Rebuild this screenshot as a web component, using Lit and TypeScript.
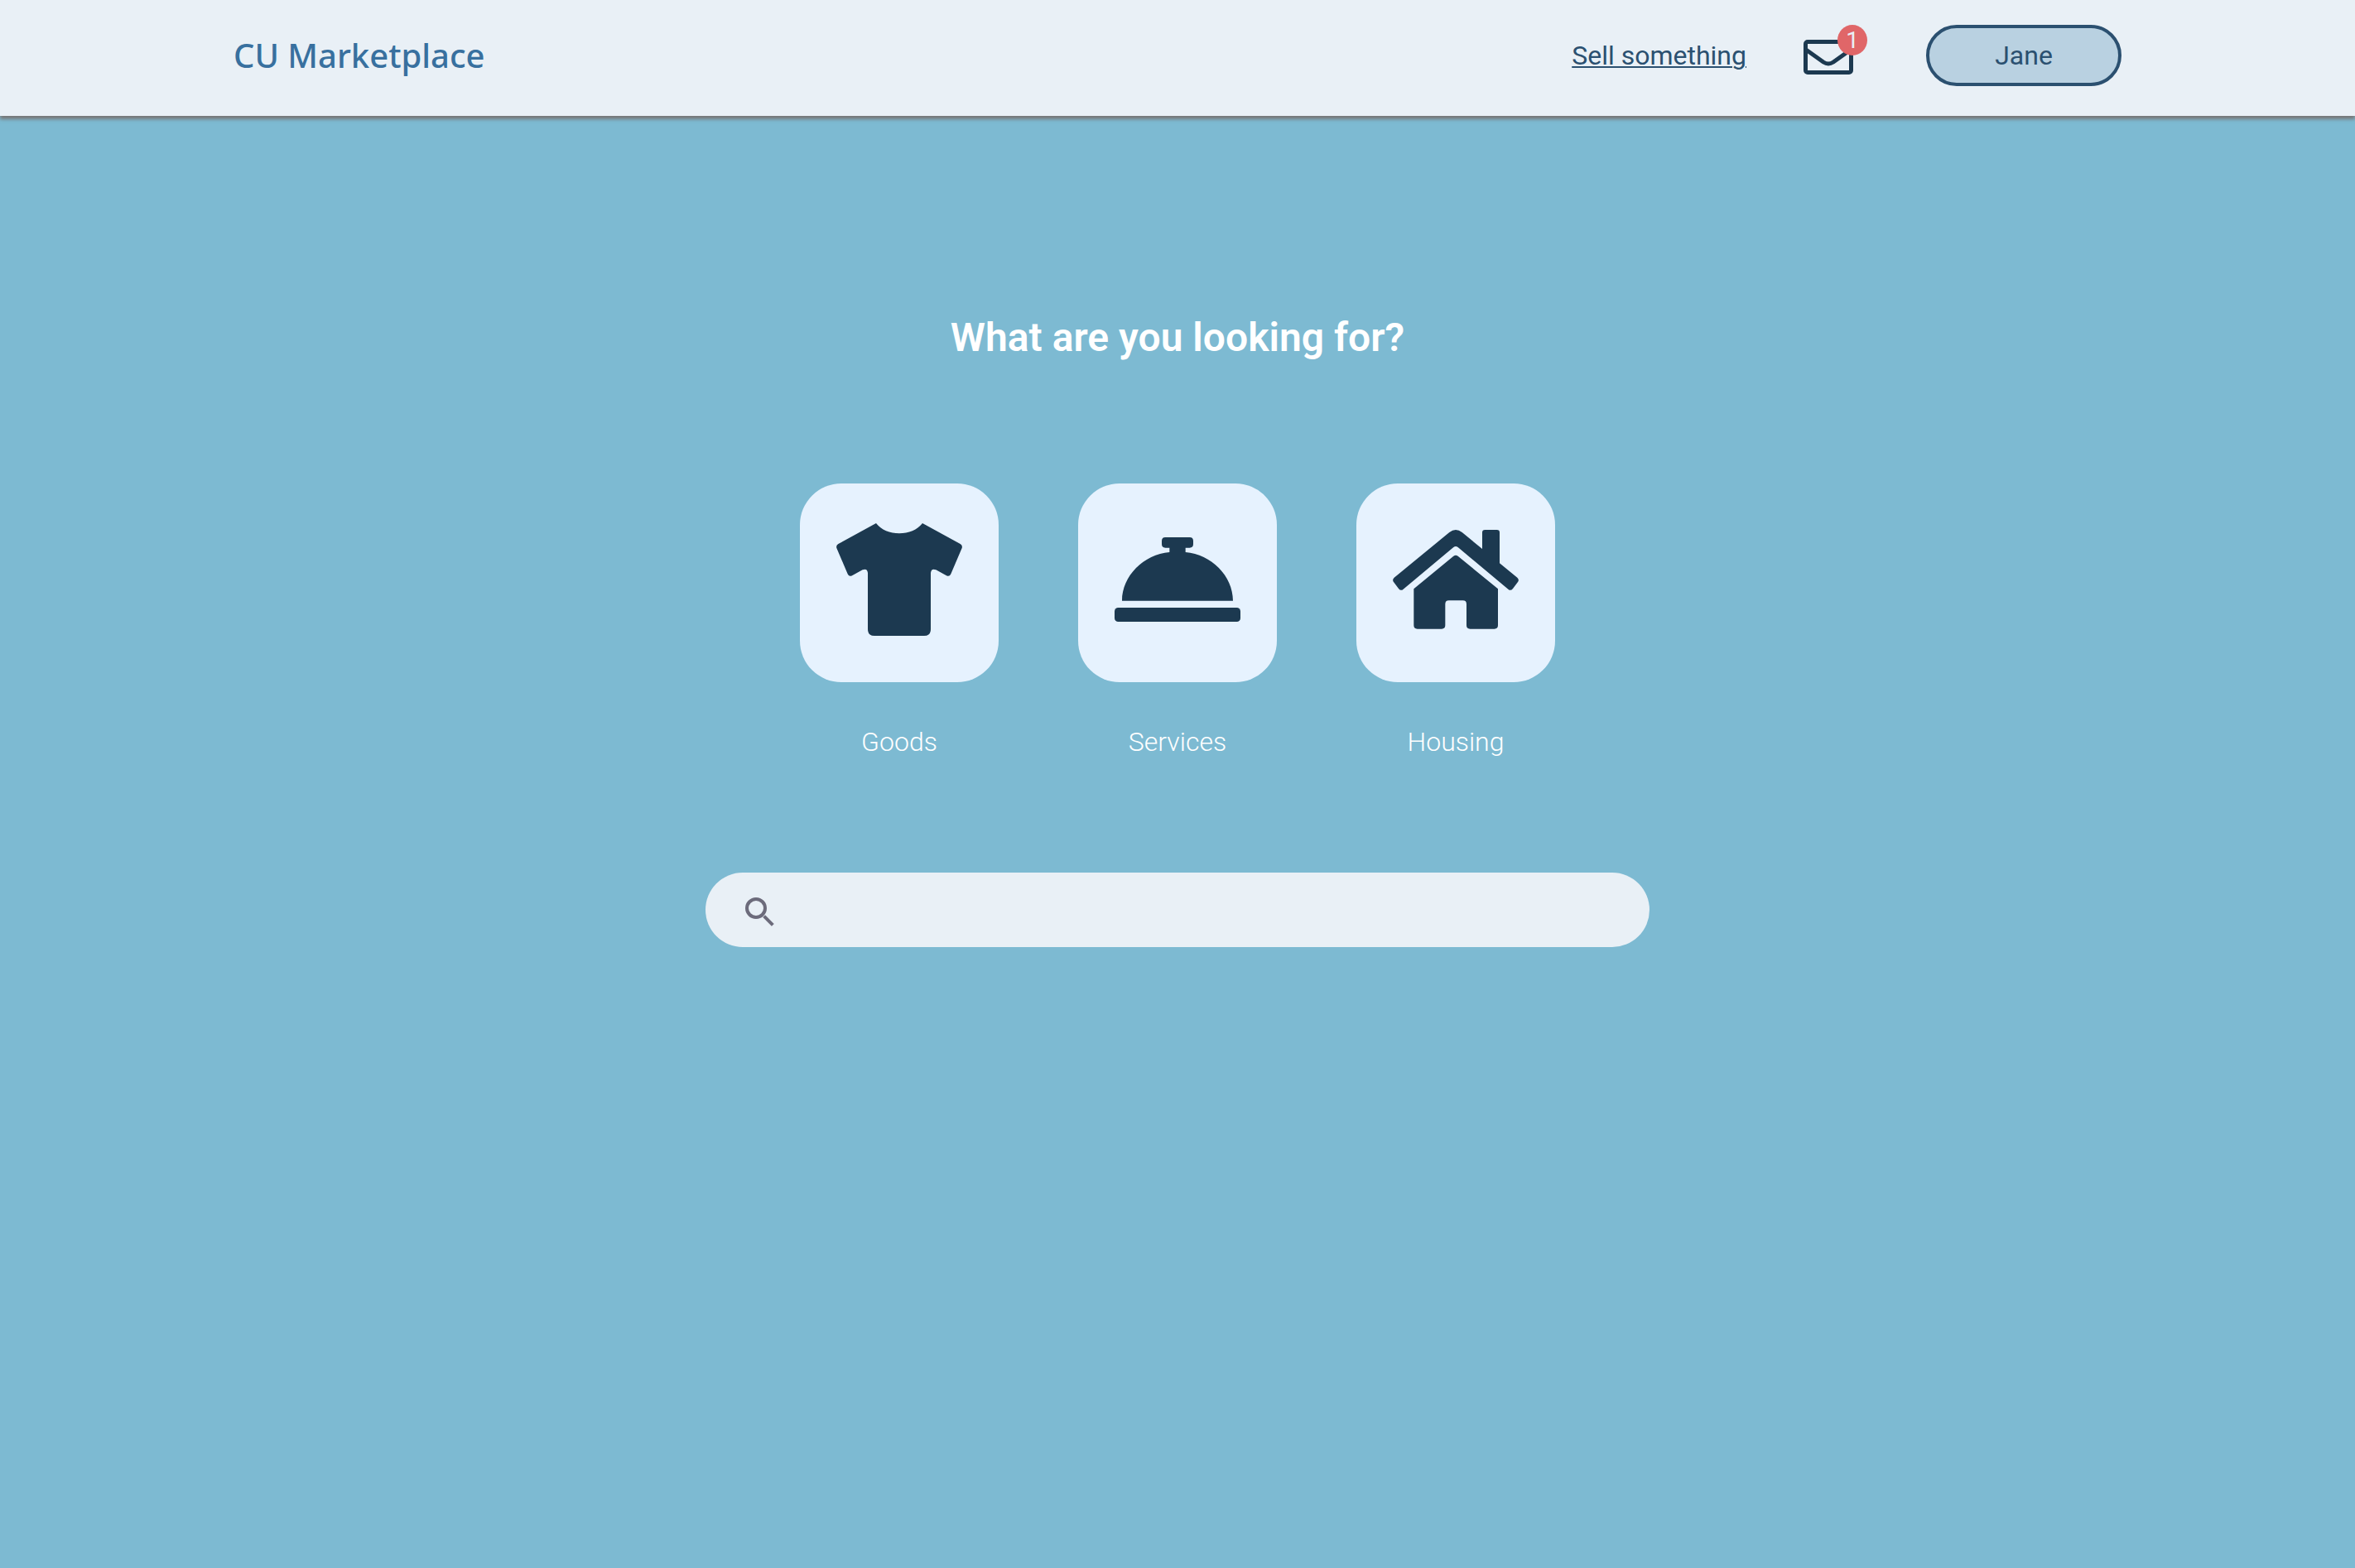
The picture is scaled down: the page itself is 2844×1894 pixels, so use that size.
import { LitElement, html, css, svg } from "lit";
import { customElement, property } from "lit/decorators.js";

const shirt = svg`<path d="M144 24 C180 73 276 73 312 24 L449 99 Q458 104 455 114 L415 208 Q410 219 399 214 L361 193 Q344 186 342 204 V408 Q342 432 318 432 H138 Q114 432 114 408 V204 Q112 186 95 193 L57 214 Q46 219 41 208 L1 114 Q-2 104 7 99 Z"/>`;

const bell = svg`<path d="M184 75 H272 Q285 75 285 88 V100 Q285 113 272 113 H257 V129 C350 137 429 215 429 305 H27 C27 215 106 137 199 129 V113 H184 Q171 113 171 100 V88 Q171 75 184 75 Z"/><rect x="0" y="330" width="456" height="51" rx="13"/>`;

const house = svg`<path d="M205 57 Q228 39 251 57 L324 117 V58 Q324 48 334 48 H377 Q387 48 387 58 V169 L451 221 Q459 229 453 237 L435 261 Q427 271 418 263 L236 111 Q228 105 220 111 L38 263 Q29 271 21 261 L3 237 Q-3 229 5 221 Z"/><path d="M220 143 Q228 137 236 143 L381 262 V394 Q381 407 368 407 H280 Q267 407 267 394 V317 Q267 304 254 304 H203 Q190 304 190 317 V394 Q190 407 177 407 H89 Q76 407 76 394 V262 Z"/>`;

@customElement("category-tile")
export class CategoryTile extends LitElement {
  static styles = css`
    :host {
      display: block;
    }
    .link {
      display: flex;
      flex-direction: column;
      align-items: center;
      gap: 52px;
      color: #fff;
      text-decoration: none;
      font: 300 32px/40px Roboto, sans-serif;
    }
    .tile {
      box-sizing: border-box;
      display: flex;
      align-items: center;
      justify-content: center;
      width: 240px;
      height: 240px;
      padding-bottom: 8px;
      border-radius: 50px;
      background: #e6f2fe;
    }
    .icon {
      display: block;
      width: 152px;
      height: 152px;
      fill: #1c3950;
    }
  `;

  @property() label = "";
  @property({ attribute: false }) icon: unknown;

  render() {
    return html`<a class="link" href="#${this.label.toLowerCase()}">
      <span class="tile"><svg class="icon" viewBox="0 0 456 456" aria-hidden="true">${this.icon}</svg></span>
      <span>${this.label}</span>
    </a>`;
  }
}

@customElement("app-root")
export class AppRoot extends LitElement {
  static styles = css`
    :host {
      display: block;
      min-height: 100vh;
      background: #7dbad2;
      font: 400 32px/40px Roboto, sans-serif;
      color: #2b5070;
    }
    .bar {
      display: flex;
      align-items: center;
      justify-content: space-between;
      padding: 30px 282px 36px;
      background: #e9f0f6;
      box-shadow: 0 4px 4px #777;
    }
    .brand {
      font: 500 40px/48px "Noto Sans", sans-serif;
      color: #38709f;
      text-decoration: none;
    }
    .nav {
      display: flex;
      align-items: center;
    }
    .sell {
      color: inherit;
      text-underline-offset: 2px;
      text-decoration-thickness: 2px;
    }
    .mail {
      position: relative;
      margin: 4px 88px 0 69px;
      padding: 0;
      border: 0;
      background: none;
    }
    .envelope {
      display: block;
      width: 60px;
      height: 42px;
      fill: none;
      stroke: #1c3950;
      stroke-width: 5;
    }
    .badge {
      position: absolute;
      top: -18px;
      right: -17px;
      width: 36px;
      height: 37px;
      border-radius: 50%;
      background: #e06668;
      color: #e9f0f6;
      font: 400 28px/38px Roboto, sans-serif;
      text-align: center;
    }
    .user {
      box-sizing: border-box;
      width: 236px;
      height: 74px;
      padding: 0;
      border: 4px solid #2b5070;
      border-radius: 37px;
      background: #b9d1e1;
      color: inherit;
      font: inherit;
    }
    .main {
      display: flex;
      flex-direction: column;
      align-items: center;
      padding: 240px 32px 64px;
    }
    .title {
      margin: 0 0 148px;
      color: #fff;
      font: 600 48px/56px Roboto, sans-serif;
    }
    .tiles {
      display: flex;
      flex-wrap: wrap;
      justify-content: center;
      gap: 96px;
      margin-bottom: 138px;
    }
    .search {
      box-sizing: border-box;
      display: flex;
      align-items: center;
      gap: 24px;
      width: 100%;
      max-width: 1140px;
      height: 90px;
      padding: 0 48px;
      border-radius: 45px;
      background: #e9f0f6;
    }
    .glass {
      flex: none;
      width: 35px;
      height: 35px;
      margin-top: 4px;
      fill: none;
      stroke: #6c6b7b;
      stroke-width: 12;
    }
    .field {
      flex: 1;
      min-width: 0;
      border: 0;
      outline: 0;
      background: none;
      color: inherit;
      font: inherit;
    }
  `;

  private categories = [
    { label: "Goods", icon: shirt },
    { label: "Services", icon: bell },
    { label: "Housing", icon: house },
  ];

  render() {
    return html`
      <header class="bar">
        <a class="brand" href="#home">CU Marketplace</a>
        <nav class="nav">
          <a class="sell" href="#sell">Sell something</a>
          <button class="mail" aria-label="Messages">
            <svg class="envelope" viewBox="0 0 60 42" aria-hidden="true">
              <rect x="2.5" y="2.5" width="55" height="37" rx="2.5" />
              <path d="M3 12 L24 27 Q30 31 36 27 L57 12" />
            </svg>
            <span class="badge">1</span>
          </button>
          <button class="user">Jane</button>
        </nav>
      </header>
      <main class="main">
        <h1 class="title">What are you looking for?</h1>
        <div class="tiles">
          ${this.categories.map(
            (c) => html`<category-tile .label=${c.label} .icon=${c.icon}></category-tile>`
          )}
        </div>
        <label class="search">
          <svg class="glass" viewBox="0 0 105 105" aria-hidden="true">
            <circle cx="39" cy="39" r="33" />
            <path d="M68 68 L100 100" />
          </svg>
          <input class="field" type="text" aria-label="Search" />
        </label>
      </main>
    `;
  }
}
